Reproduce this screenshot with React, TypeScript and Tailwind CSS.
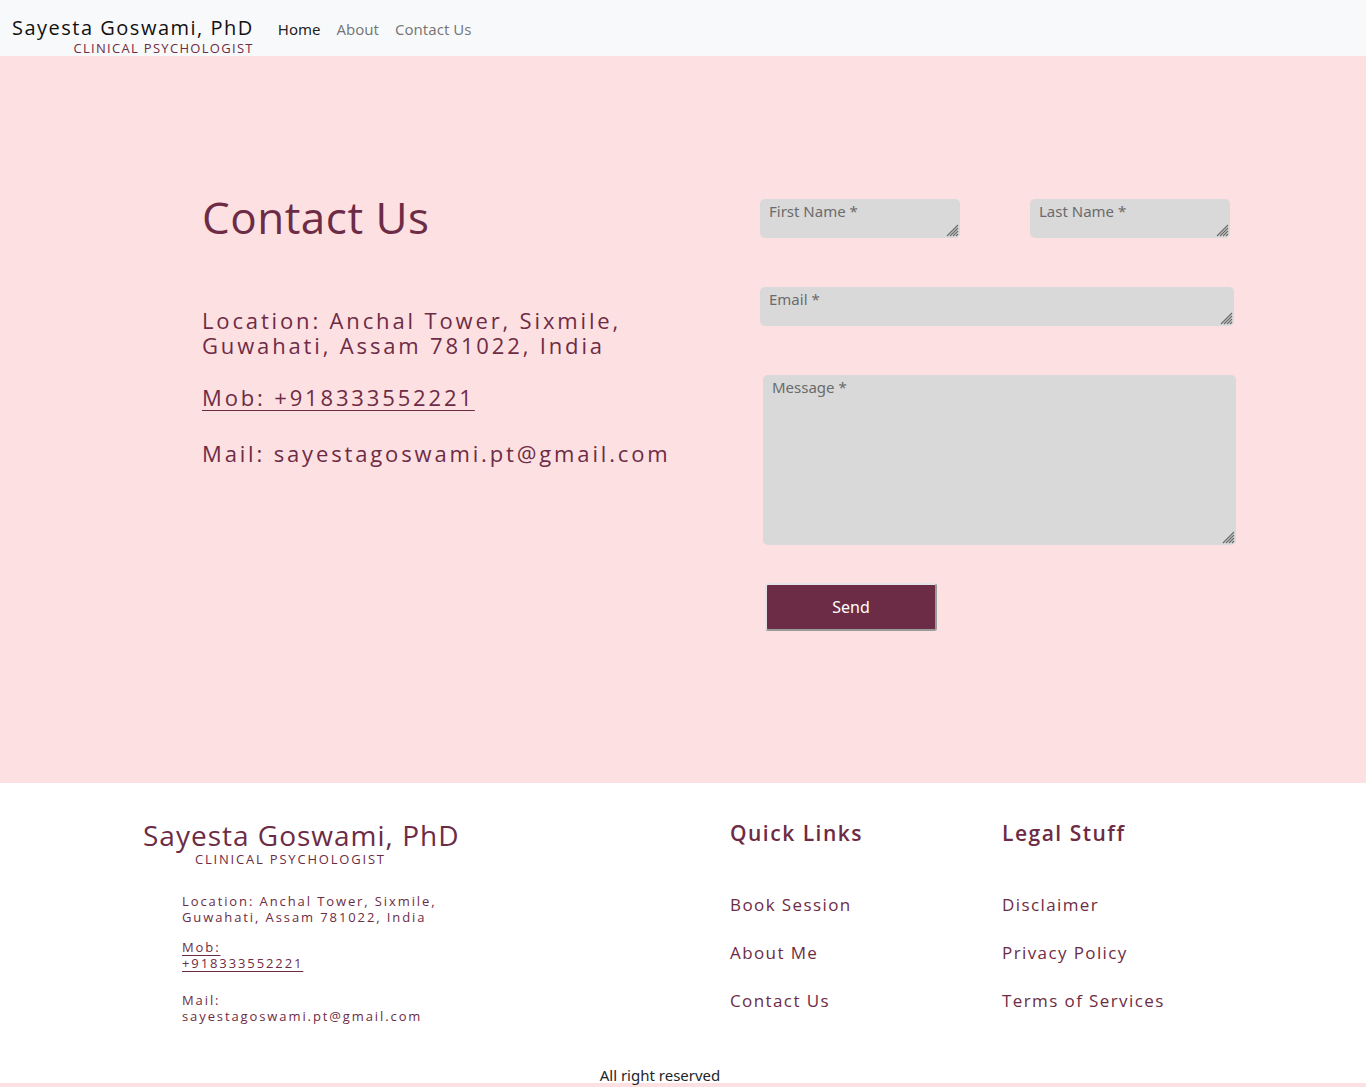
import React from 'react';

const maroon = 'text-[#6d2c45]';

export default function App() {
  return (
    <div className="min-h-screen bg-[#fde0e2] font-['Open_Sans',sans-serif]">
      <nav className="h-[56px] bg-[#f8f9fa] flex items-start pl-[12px]">
        <div className="flex flex-col items-end pt-[16px]">
          <span className="text-[20px] leading-[24px] tracking-[1.5px] text-[#111]">Sayesta Goswami, PhD</span>
          <span className={`text-[13px] leading-[16px] tracking-[1.3px] ${maroon}`}>CLINICAL PSYCHOLOGIST</span>
        </div>
        <div className="flex ml-[16px] pt-[17px] font-['Noto_Sans',sans-serif] text-[15px] leading-[24px]">
          <a className="px-[8px] text-black/90">Home</a>
          <a className="px-[8px] text-black/55">About</a>
          <a className="px-[8px] text-black/55">Contact Us</a>
        </div>
      </nav>

      <section className="h-[727px] pt-[135px] pl-[202px] flex">
        <div className={`w-[558px] ${maroon}`}>
          <h1 className="text-[44px] leading-[53px] tracking-[0.5px]">Contact Us</h1>
          <p className="mt-[64px] text-[22px] leading-[25px] tracking-[2.85px] pr-[60px]">
            Location: Anchal Tower, Sixmile, Guwahati, Assam 781022, India
          </p>
          <p className="mt-[27px] text-[22px] leading-[25px] tracking-[2.85px]">
            <a className="underline underline-offset-[4px] decoration-1">Mob: +918333552221</a>
          </p>
          <p className="mt-[31px] text-[22px] leading-[25px] tracking-[2.85px]">Mail: sayestagoswami.pt@gmail.com</p>
        </div>

        <form className="w-[476px] pt-[8px] font-['Noto_Sans',sans-serif]" onSubmit={(e) => e.preventDefault()}>
          <div className="flex gap-[70px]">
            <Field placeholder="First Name *" className="w-[200px] h-[39px]" />
            <Field placeholder="Last Name *" className="w-[200px] h-[39px]" />
          </div>
          <Field placeholder="Email *" className="mt-[49px] w-[474px] h-[39px]" />
          <Field placeholder="Message *" className="mt-[49px] ml-[3px] w-[473px] h-[170px]" />
          <button className="mt-[38px] ml-[5px] w-[172px] h-[48px] rounded-[3px] bg-[#6d2c45] text-white text-[16px] border-2 border-[#e3e3e3] border-r-[#9a9a9a] border-b-[#9a9a9a]">
            Send
          </button>
        </form>
      </section>

      <footer className="bg-white h-[300px] relative">
        <div className="flex pt-[37px]">
          <div className={`w-[730px] pl-[143px] ${maroon}`}>
            <div className="text-[28px] leading-[31px] tracking-[1px]">Sayesta Goswami, PhD</div>
            <div className="pl-[52px] text-[13px] leading-[16px] tracking-[1.8px]">CLINICAL PSYCHOLOGIST</div>
            <div className="pl-[39px] w-[340px] text-[13px] leading-[16px] tracking-[1.9px]">
              <p className="mt-[26px]">Location: Anchal Tower, Sixmile, Guwahati, Assam 781022, India</p>
              <p className="mt-[14px]">
                <a className="underline underline-offset-[3px]">Mob:<br />+918333552221</a>
              </p>
              <p className="mt-[21px]">Mail:<br />sayestagoswami.pt@gmail.com</p>
            </div>
          </div>
          <LinkColumn title="Quick Links" links={['Book Session', 'About Me', 'Contact Us']} />
          <LinkColumn title="Legal Stuff" links={['Disclaimer', 'Privacy Policy', 'Terms of Services']} />
        </div>
        <div className="absolute left-0 right-0 bottom-0 text-center pr-[46px] font-['Noto_Sans',sans-serif] text-[15px] leading-[16px] text-[#212529]">
          All right reserved
        </div>
      </footer>
    </div>
  );
}

function Field({ placeholder, className }: { placeholder: string; className: string }) {
  return (
    <div className={`relative ${className}`}>
      <textarea
        placeholder={placeholder}
        className="block w-full h-full resize-none bg-[#d9d9d9] rounded-[5px] px-[9px] py-[1px] text-[15px] leading-[22px] text-[#333] placeholder:text-[#6b6b6b] outline-none"
      />
      <svg className="absolute right-[1px] bottom-[1px] pointer-events-none" width="14" height="14" viewBox="0 0 14 14">
        <path d="M13 2 L2 13 M13 5 L5 13 M13 8 L8 13 M13 11 L11 13" stroke="#6b6b6b" strokeWidth="1.2" />
      </svg>
    </div>
  );
}

function LinkColumn({ title, links }: { title: string; links: string[] }) {
  return (
    <div className={`w-[272px] ${maroon}`}>
      <h3 className="text-[21px] leading-[28px] font-semibold tracking-[1.5px] -mt-[1px]">{title}</h3>
      <ul className="mt-[46px] flex flex-col gap-[24px] text-[17px] leading-[24px] tracking-[1.4px]">
        {links.map((l) => (
          <li key={l}>{l}</li>
        ))}
      </ul>
    </div>
  );
}
